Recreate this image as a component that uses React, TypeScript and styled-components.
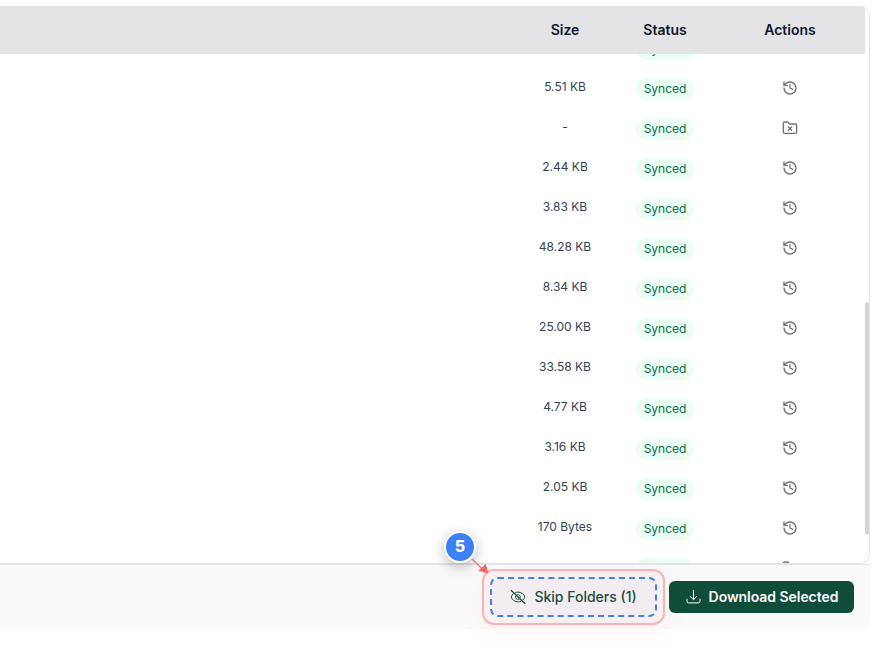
import React from "react";
import styled, { createGlobalStyle } from "styled-components";
import { History, FolderX } from "lucide-react";

const Global = createGlobalStyle`
  *, *::before, *::after { box-sizing: border-box; }
  body { margin: 0; background: #fff; font-family: Inter, sans-serif; overflow: hidden; }
`;

const Page = styled.main`
  position: relative;
  width: 894px;
  height: 645px;
  padding-top: 6px;
  overflow: hidden;
  background: #fff;
`;

const TableCard = styled.section`
  width: 870px;
  height: 558px;
  border: 1px solid #e4e4e7;
  border-width: 0 1px 1px 0;
  border-radius: 0 10px 10px 0;
  overflow: hidden;
  display: grid;
  grid-template-columns: 865px 4px;
`;

const TableArea = styled.div`
  height: 557px;
  display: flex;
  flex-direction: column;
  overflow: hidden;
`;

const HeaderRow = styled.div`
  flex: none;
  height: 48px;
  display: grid;
  grid-template-columns: 515px 100px 100px 150px;
  align-items: center;
  text-align: center;
  background: #e4e4e6;
  color: #0f172a;
  font-size: 14px;
  line-height: 20px;
  font-weight: 600;
`;

const Body = styled.div`
  flex: 1;
  min-height: 0;
  overflow: hidden;
`;

const Rows = styled.div`
  margin-top: -26px;
`;

const Row = styled.div`
  height: 40px;
  display: grid;
  grid-template-columns: 515px 100px 100px 150px;
  justify-items: center;
  align-items: center;
`;

const SizeText = styled.span`
  font-size: 12px;
  line-height: 18px;
  color: #334155;
  margin-bottom: 2px;
`;

const Pill = styled.span`
  height: 22px;
  margin-top: 2px;
  padding: 0 8px;
  border-radius: 11px;
  background: #ecfdf5;
  color: #047048;
  font-size: 12px;
  line-height: 22px;
`;

const ActionIcon = styled.span`
  display: flex;
  color: #71717a;
`;

const ScrollTrack = styled.div`
  padding-top: 296px;
`;

const ScrollThumb = styled.div`
  height: 233px;
  border-radius: 2px;
  background: #d1d5db;
`;

const Footer = styled.footer`
  width: 870px;
  height: 65px;
  padding: 0 16px 0 0;
  border-top: 1px solid #e4e4e7;
  border-radius: 0 0 10px 0;
  background: #fafafa;
  display: flex;
  justify-content: flex-end;
  align-items: center;
  gap: 4px;
`;

const Highlight = styled.div`
  width: 183px;
  height: 56px;
  padding: 6px;
  border: 2px solid #f8b4b4;
  border-radius: 12px;
  background: #fbf0f1;
  box-shadow: 0 8px 28px rgba(239, 68, 68, 0.05);
`;

const SkipButton = styled.button`
  width: 167px;
  height: 40px;
  padding: 0;
  border: 2px dashed #4080ee;
  border-radius: 8px;
  background: #f3edf1;
  background-clip: padding-box;
  color: #1b4d3d;
  font: 500 14px/20px Inter, sans-serif;
  display: flex;
  align-items: center;
  justify-content: center;
  gap: 8px;
`;

const DownloadButton = styled.button`
  width: 185px;
  height: 32px;
  padding: 0;
  border: 0;
  border-radius: 6px;
  background: #0f4c3a;
  color: #fff;
  font: 600 14px/20px Inter, sans-serif;
  letter-spacing: -0.05px;
  display: flex;
  align-items: center;
  justify-content: center;
  gap: 8px;
`;

const Callout = styled.div`
  position: absolute;
  left: 444px;
  top: 531px;
  width: 32px;
  height: 32px;
  border: 2px solid #fff;
  border-radius: 50%;
  background: #3b82f6;
  box-shadow: 0 4px 14px rgba(0, 0, 0, 0.25);
  color: #fff;
  font-size: 16px;
  line-height: 26px;
  font-weight: 800;
  text-align: center;
`;

const Arrow = styled.svg`
  position: absolute;
  left: 464px;
  top: 551px;
`;

type RowData = { size: string; folder?: boolean; noAction?: boolean };

const rows: RowData[] = [
  { size: "", noAction: true },
  { size: "5.51 KB" },
  { size: "-", folder: true },
  { size: "2.44 KB" },
  { size: "3.83 KB" },
  { size: "48.28 KB" },
  { size: "8.34 KB" },
  { size: "25.00 KB" },
  { size: "33.58 KB" },
  { size: "4.77 KB" },
  { size: "3.16 KB" },
  { size: "2.05 KB" },
  { size: "170 Bytes" },
  { size: "", folder: true },
];

const EyeOffIcon = () => (
  <svg width="16" height="16" viewBox="0 0 16 16" fill="none" stroke="currentColor" strokeLinecap="round" strokeLinejoin="round">
    <path d="M1.3 1.5l13.6 13" strokeWidth="1.3" />
    <path d="M5.6 3.5A7 7 0 0 1 8 3.1c3.3 0 5.8 2 6.9 4.9a8.4 8.4 0 0 1-2.1 3.2M3.6 4.4A8.3 8.3 0 0 0 1.1 8c1.1 2.9 3.6 4.9 6.9 4.9a7.4 7.4 0 0 0 2.8-.5M7.6 5.6a2.4 2.4 0 0 1 2.8 2.8M5.8 7a2.4 2.4 0 0 0 3.3 3.2" />
  </svg>
);

const DownloadIcon = () => (
  <svg width="16" height="16" viewBox="0 0 16 16" fill="none" stroke="currentColor" strokeLinecap="round" strokeLinejoin="round">
    <path d="M8.5 1.5v9M5.2 7.4l3.3 3.2 3.3-3.2M2 10.2v2.2A1.5 1.5 0 0 0 3.5 13.9h10a1.5 1.5 0 0 0 1.5-1.5v-2.2" />
  </svg>
);

export default function App() {
  return (
    <>
      <Global />
      <Page>
        <TableCard>
          <TableArea>
            <HeaderRow>
              <span />
              <span>Size</span>
              <span>Status</span>
              <span>Actions</span>
            </HeaderRow>
            <Body>
              <Rows>
                {rows.map((row, i) => (
                  <Row key={i}>
                    <span />
                    <SizeText>{row.size}</SizeText>
                    <Pill>Synced</Pill>
                    {!row.noAction && (
                      <ActionIcon>
                        {row.folder ? <FolderX size={16} strokeWidth={2} /> : <History size={16} strokeWidth={2} />}
                      </ActionIcon>
                    )}
                  </Row>
                ))}
              </Rows>
            </Body>
          </TableArea>
          <ScrollTrack>
            <ScrollThumb />
          </ScrollTrack>
        </TableCard>
        <Footer>
          <Highlight>
            <SkipButton>
              <EyeOffIcon />
              Skip Folders (1)
            </SkipButton>
          </Highlight>
          <DownloadButton>
            <DownloadIcon />
            Download Selected
          </DownloadButton>
        </Footer>
        <Arrow width="28" height="28" viewBox="0 0 28 28">
          <path d="M8 8l11 10.5" stroke="#ee8a8a" strokeWidth="1.7" />
          <path d="M24.4 22.6l-10-2.8 7.4-6.8z" fill="#ef6868" />
        </Arrow>
        <Callout>5</Callout>
      </Page>
    </>
  );
}
